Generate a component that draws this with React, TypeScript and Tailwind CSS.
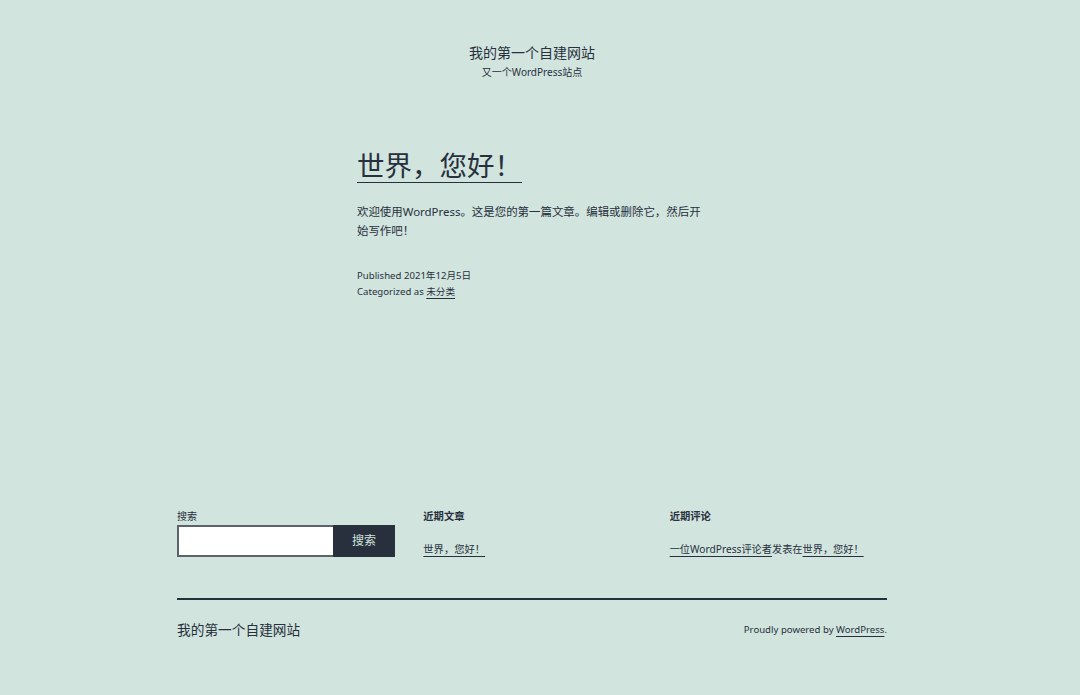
export default function App() {
  const link = "underline underline-offset-[3px] decoration-[1px] decoration-[#28303d]";

  return (
    <div className="min-h-[695px] w-full bg-[#d1e4dd] text-[#28303d] font-['Noto_Sans','Noto_Sans_CJK_SC',sans-serif]">
      <div className="w-[1064px] flex flex-col">
        {/* Site header */}
        <header className="pt-[43px] flex flex-col items-center">
          <div className="text-[14px] leading-[20px]">我的第一个自建网站</div>
          <div className="mt-[2px] text-[10px] leading-[14px]">又一个WordPress站点</div>
        </header>

        {/* Post */}
        <main className="w-[352px] mx-auto pl-[1px]">
          <h1 className="mt-[69px] text-[27.5px] leading-[36px] font-normal">
            <span className="underline underline-offset-[6px] decoration-[1px] decoration-[#28303d]">世界，您好！</span>
          </h1>
          <p className="mt-[17.5px] text-[11.45px] leading-[19px]">
            欢迎使用WordPress。这是您的第一篇文章。编辑或删除它，然后开始写作吧！
          </p>
          <div className="mt-[28.5px] text-[9.6px] leading-[16px]">
            <div>Published 2021年12月5日</div>
            <div>
              Categorized as <span className={link}>未分类</span>
            </div>
          </div>
        </main>

        {/* Widgets */}
        <section className="w-[710px] mx-auto mt-[208.5px] grid grid-cols-3 gap-x-[29px]">
          <div className="flex flex-col">
            <div className="text-[10px] leading-[14px]">搜索</div>
            <div className="mt-[2px] flex h-[32px] w-[218px]">
              <div className="flex-1 bg-white border-2 border-[#5c636b] border-r-0" />
              <button className="w-[62px] bg-[#28303d] text-[#d1e4dd] text-[12px] leading-[32px]">搜索</button>
            </div>
          </div>
          <div className="flex flex-col">
            <div className="text-[10.3px] leading-[14px] font-bold">近期文章</div>
            <div className="mt-[19px] text-[10.3px] leading-[14px]">
              <span className={link}>世界，您好！</span>
            </div>
          </div>
          <div className="flex flex-col">
            <div className="text-[10.3px] leading-[14px] font-bold">近期评论</div>
            <div className="mt-[19px] text-[10.2px] leading-[14px]">
              <span className={link}>一位WordPress评论者</span>发表在<span className={link}>世界，您好！</span>
            </div>
          </div>
        </section>

        {/* Footer */}
        <footer className="w-[710px] mx-auto mt-[41px] border-t-2 border-[#28303d] pt-[20px] flex items-center justify-between">
          <div className="text-[13.7px] leading-[20px]">我的第一个自建网站</div>
          <div className="text-[9.6px] leading-[20px]">
            Proudly powered by <span className={link}>WordPress</span>.
          </div>
        </footer>
      </div>
    </div>
  );
}
